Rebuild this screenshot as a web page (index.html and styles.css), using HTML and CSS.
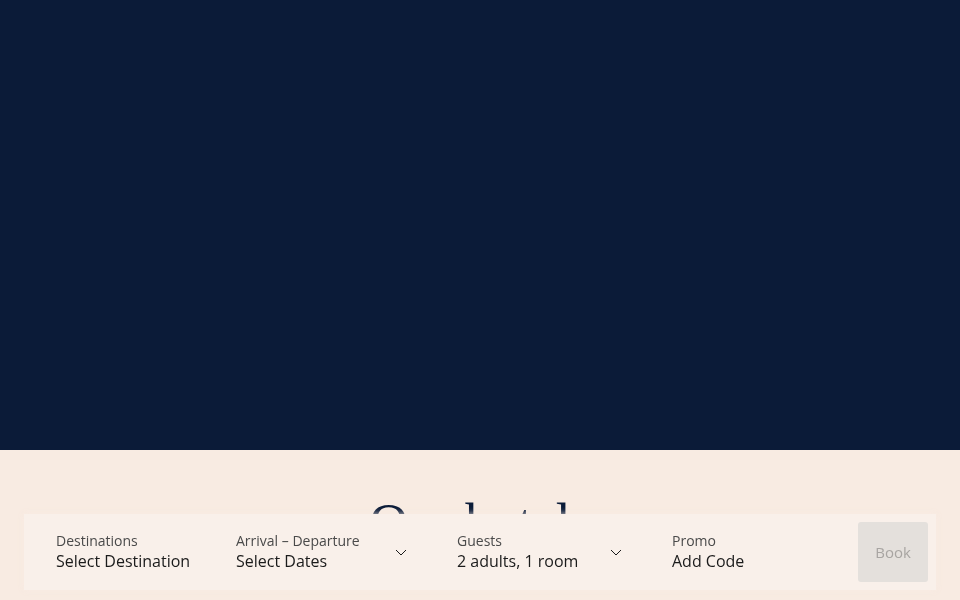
FILE: index.html
```html
<!DOCTYPE html>
<html lang="en">
<head>
<meta charset="utf-8">
<title>Hotels</title>
<link rel="stylesheet" href="styles.css">
</head>
<body>
<section class="hero"></section>
<section class="intro">
  <h1 class="intro-title">Our hotels</h1>
</section>
<form class="booking">
  <div class="field">
    <div class="field-text">
      <span class="field-label">Destinations</span>
      <span class="field-value">Select Destination</span>
    </div>
  </div>
  <div class="field field-select">
    <div class="field-text">
      <span class="field-label">Arrival – Departure</span>
      <span class="field-value">Select Dates</span>
    </div>
    <svg class="chevron" width="12" height="7" viewBox="0 0 12 7"><path d="M1 1l5 5 5-5" fill="none" stroke="#1b1b1b" stroke-width="1"/></svg>
  </div>
  <div class="field field-select">
    <div class="field-text">
      <span class="field-label">Guests</span>
      <span class="field-value">2 adults, 1 room</span>
    </div>
    <svg class="chevron" width="12" height="7" viewBox="0 0 12 7"><path d="M1 1l5 5 5-5" fill="none" stroke="#1b1b1b" stroke-width="1"/></svg>
  </div>
  <div class="field">
    <div class="field-text">
      <span class="field-label">Promo</span>
      <span class="field-value">Add Code</span>
    </div>
  </div>
  <button class="book-btn" type="button" disabled>Book</button>
</form>
</body>
</html>
```
FILE: styles.css
```css
html, body {
  margin: 0;
  padding: 0;
}
body {
  background: #f8ebe2;
  font-family: "Open Sans", "Noto Sans", sans-serif;
  color: #1b1b1b;
  height: 600px;
  overflow: hidden;
}
.hero {
  height: 450px;
  background: #0b1b38;
}
.intro {
  height: 150px;
  background: #f8ebe2;
  display: flex;
  justify-content: center;
}
.intro-title {
  margin: 46px 0 0;
  font-family: "Liberation Serif", "DejaVu Serif", serif;
  font-weight: 400;
  font-size: 54px;
  line-height: 1;
  letter-spacing: -0.5px;
  color: #0b1b38;
}
.booking {
  position: fixed;
  left: 24px;
  right: 24px;
  bottom: 10px;
  height: 76px;
  box-sizing: border-box;
  padding: 8px 8px 8px 32px;
  background: #f9f0ea;
  box-shadow: 0 0 6px rgba(248, 235, 226, 0.9);
  display: grid;
  grid-template-columns: 180px 221px 215px 1fr auto;
  align-items: center;
  margin: 0;
}
.field {
  display: flex;
  align-items: center;
}
.field-select {
  padding-right: 50px;
  justify-content: space-between;
}
.field-text {
  display: flex;
  flex-direction: column;
}
.field-label {
  font-size: 14px;
  line-height: 18px;
  color: #4a4a4a;
}
.field-value {
  font-size: 16px;
  line-height: 22px;
  color: #1b1b1b;
}
.chevron {
  display: block;
}
.book-btn {
  width: 70px;
  height: 60px;
  border: none;
  border-radius: 3px;
  background: #e4e0dc;
  color: #a8a5a2;
  font-family: inherit;
  font-size: 15px;
  padding: 0;
}
```
